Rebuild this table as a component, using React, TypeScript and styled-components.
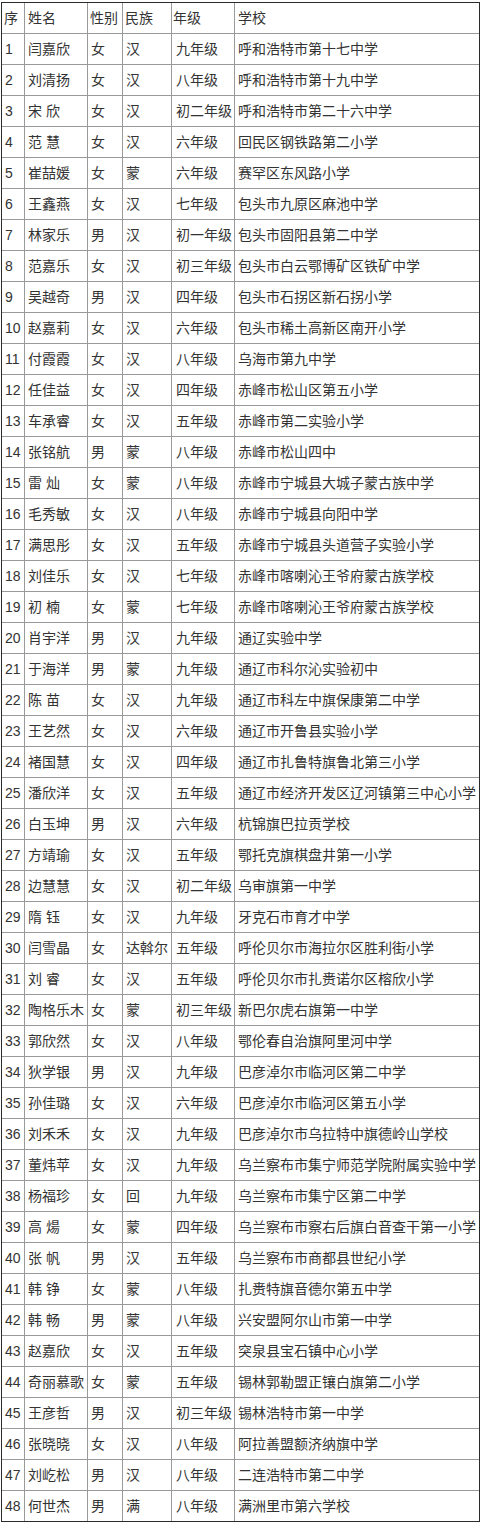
import React from 'react';
import styled, { createGlobalStyle } from 'styled-components';

const GlobalStyles = createGlobalStyle`
  html, body {
    margin: 0;
    padding: 0;
    background: #ffffff;
  }
  body {
    font-family: "Liberation Sans", "Noto Sans CJK SC", sans-serif;
    font-size: 14px;
    color: #333333;
  }
`;

// last column is 1px narrower since the table's own border closes it
const columns = '23px 63px 35px 49px 63px 244px';

const Table = styled.div`
  display: flex;
  flex-direction: column;
  width: 479px;
  margin: 2px 0 0 1px;
  border: 1px solid #2b2b2b;
  box-sizing: border-box;
`;

const Row = styled.div`
  display: grid;
  grid-template-columns: ${columns};
  height: 31px;
  box-sizing: border-box;
  border-bottom: 1px solid #9a9a9a;

  &:last-child {
    height: 30px;
    border-bottom: none;
  }
`;

const Cell = styled.div<{ $pad?: number }>`
  display: flex;
  align-items: center;
  box-sizing: border-box;
  padding-left: ${(p) => p.$pad ?? 3}px;
  border-right: 1px solid #9a9a9a;
  white-space: nowrap;
  overflow: hidden;
  line-height: 1;

  &:last-child {
    border-right: none;
  }
`;

const header = ['序', '姓名', '性别', '民族', '年级', '学校'];
const headerPad = [2, 3, 2, 2, 1, 3];
const bodyPad = [3, 3, 3, 4, 3];

const rows: string[][] = [
  ['闫嘉欣', '女', '汉', '九年级', '呼和浩特市第十七中学'],
  ['刘清扬', '女', '汉', '八年级', '呼和浩特市第十九中学'],
  ['宋 欣', '女', '汉', '初二年级', '呼和浩特市第二十六中学'],
  ['范 慧', '女', '汉', '六年级', '回民区钢铁路第二小学'],
  ['崔喆媛', '女', '蒙', '六年级', '赛罕区东风路小学'],
  ['王鑫燕', '女', '汉', '七年级', '包头市九原区麻池中学'],
  ['林家乐', '男', '汉', '初一年级', '包头市固阳县第二中学'],
  ['范嘉乐', '女', '汉', '初三年级', '包头市白云鄂博矿区铁矿中学'],
  ['吴越奇', '男', '汉', '四年级', '包头市石拐区新石拐小学'],
  ['赵嘉莉', '女', '汉', '六年级', '包头市稀土高新区南开小学'],
  ['付霞霞', '女', '汉', '八年级', '乌海市第九中学'],
  ['任佳益', '女', '汉', '四年级', '赤峰市松山区第五小学'],
  ['车承睿', '女', '汉', '五年级', '赤峰市第二实验小学'],
  ['张铭航', '男', '蒙', '八年级', '赤峰市松山四中'],
  ['雷 灿', '女', '蒙', '八年级', '赤峰市宁城县大城子蒙古族中学'],
  ['毛秀敏', '女', '汉', '八年级', '赤峰市宁城县向阳中学'],
  ['满思彤', '女', '汉', '五年级', '赤峰市宁城县头道营子实验小学'],
  ['刘佳乐', '女', '汉', '七年级', '赤峰市喀喇沁王爷府蒙古族学校'],
  ['初 楠', '女', '蒙', '七年级', '赤峰市喀喇沁王爷府蒙古族学校'],
  ['肖宇洋', '男', '汉', '九年级', '通辽实验中学'],
  ['于海洋', '男', '蒙', '九年级', '通辽市科尔沁实验初中'],
  ['陈 苗', '女', '汉', '九年级', '通辽市科左中旗保康第二中学'],
  ['王艺然', '女', '汉', '六年级', '通辽市开鲁县实验小学'],
  ['褚国慧', '女', '汉', '四年级', '通辽市扎鲁特旗鲁北第三小学'],
  ['潘欣洋', '女', '汉', '五年级', '通辽市经济开发区辽河镇第三中心小学'],
  ['白玉坤', '男', '汉', '六年级', '杭锦旗巴拉贡学校'],
  ['方靖瑜', '女', '汉', '五年级', '鄂托克旗棋盘井第一小学'],
  ['边慧慧', '女', '汉', '初二年级', '乌审旗第一中学'],
  ['隋 钰', '女', '汉', '九年级', '牙克石市育才中学'],
  ['闫雪晶', '女', '达斡尔', '五年级', '呼伦贝尔市海拉尔区胜利街小学'],
  ['刘 睿', '女', '汉', '五年级', '呼伦贝尔市扎赉诺尔区榕欣小学'],
  ['陶格乐木', '女', '蒙', '初三年级', '新巴尔虎右旗第一中学'],
  ['郭欣然', '女', '汉', '八年级', '鄂伦春自治旗阿里河中学'],
  ['狄学银', '男', '汉', '九年级', '巴彦淖尔市临河区第二中学'],
  ['孙佳璐', '女', '汉', '六年级', '巴彦淖尔市临河区第五小学'],
  ['刘禾禾', '女', '汉', '九年级', '巴彦淖尔市乌拉特中旗德岭山学校'],
  ['董炜苹', '女', '汉', '九年级', '乌兰察布市集宁师范学院附属实验中学'],
  ['杨福珍', '女', '回', '九年级', '乌兰察布市集宁区第二中学'],
  ['高 煬', '女', '蒙', '四年级', '乌兰察布市察右后旗白音查干第一小学'],
  ['张 帆', '男', '汉', '五年级', '乌兰察布市商都县世纪小学'],
  ['韩 铮', '女', '蒙', '八年级', '扎赉特旗音德尔第五中学'],
  ['韩 畅', '男', '蒙', '八年级', '兴安盟阿尔山市第一中学'],
  ['赵嘉欣', '女', '汉', '五年级', '突泉县宝石镇中心小学'],
  ['奇丽慕歌', '女', '蒙', '五年级', '锡林郭勒盟正镶白旗第二小学'],
  ['王彦哲', '男', '汉', '初三年级', '锡林浩特市第一中学'],
  ['张晓晓', '女', '汉', '八年级', '阿拉善盟额济纳旗中学'],
  ['刘屹松', '男', '汉', '八年级', '二连浩特市第二中学'],
  ['何世杰', '男', '满', '八年级', '满洲里市第六学校'],
];

const App: React.FC = () => {
  return (
    <>
      <GlobalStyles />
      <Table>
        <Row>
          {header.map((h, i) => (
            <Cell key={h} $pad={headerPad[i]}>
              {h}
            </Cell>
          ))}
        </Row>
        {rows.map((r, idx) => (
          <Row key={idx}>
            <Cell>{idx + 1}</Cell>
            {r.map((v, i) => (
              <Cell key={i} $pad={bodyPad[i]}>
                {v}
              </Cell>
            ))}
          </Row>
        ))}
      </Table>
    </>
  );
};

export default App;
